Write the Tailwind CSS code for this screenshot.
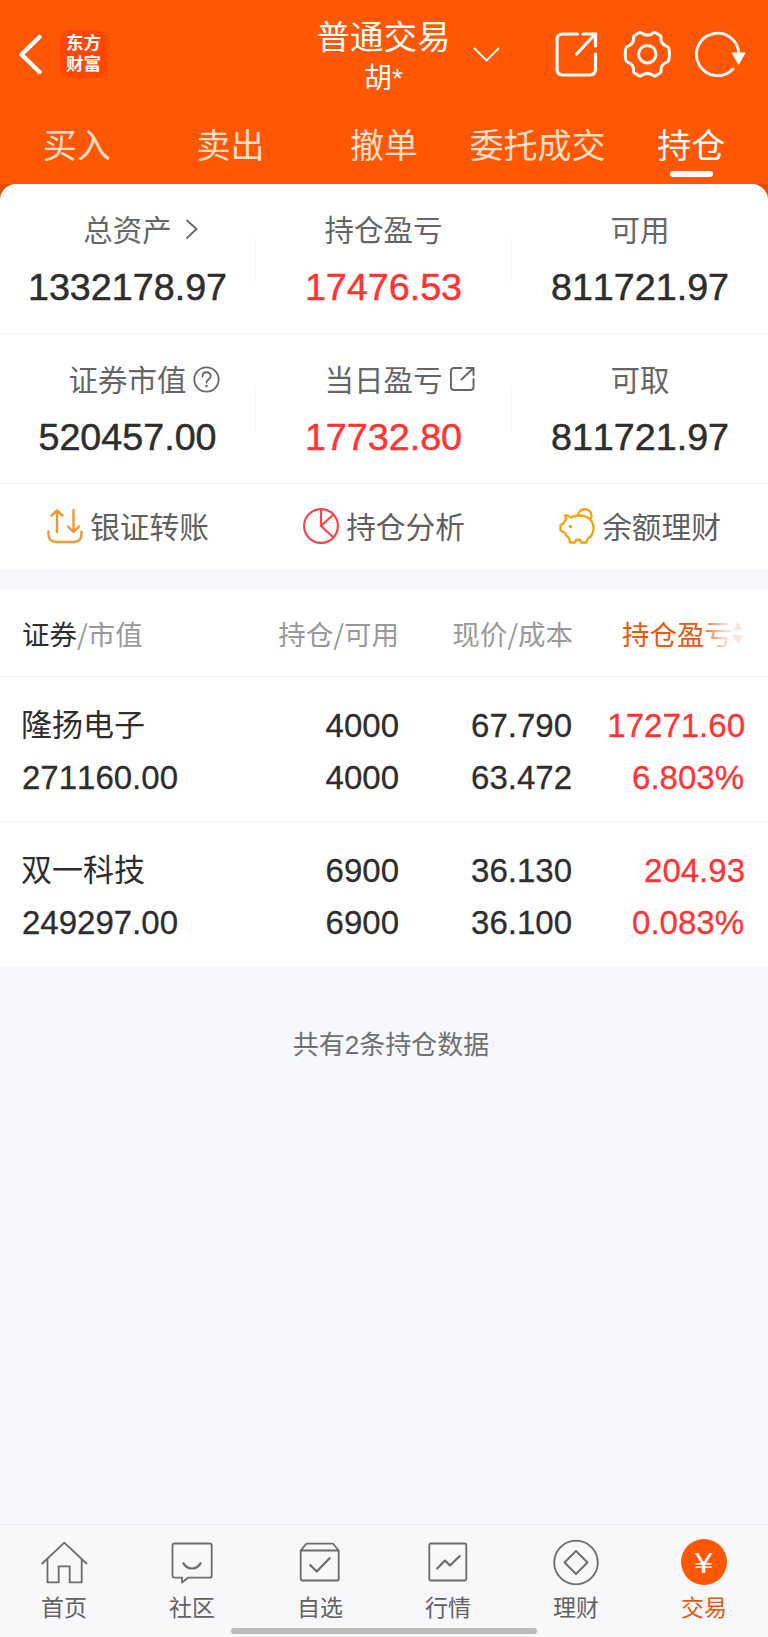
<!DOCTYPE html>
<html lang="zh-CN">
<head>
    <meta charset="UTF-8">
    <title>普通交易 - 持仓</title>
    <script src="https://cdn.jsdelivr.net/npm/@tailwindcss/browser@4"></script>
</head>
<body class="bg-[#f7f8fb] font-['Liberation_Sans','Noto_Sans_CJK_SC',sans-serif] text-[#2e2e2e] [font-kerning:none]">

<div class="relative flex h-[1637px] w-[768px] flex-col overflow-hidden">

    <!-- Header -->
    <header class="h-[184px] bg-[#ff5703] text-white">
        <div class="flex h-[108px] items-center">
            <div class="flex w-[300px] items-center pl-[17px]">
                <svg class="h-[40px] w-[26px]" viewBox="0 0 26 40" fill="none" stroke="currentColor" stroke-width="4.400" stroke-linecap="round" stroke-linejoin="round">
                    <path d="M22.500 3 4.500 20.500 22.500 38"/>
                </svg>
                <div class="ml-[17px] h-[48px] w-[47px] rounded-[10px] bg-[#ff4703] pt-[3px] text-center text-[17.500px] leading-[20.500px] font-bold">
                    东方<br>财富
                </div>
            </div>
            <div class="w-[167px] text-center">
                <div class="mt-[5px] text-[33.500px] leading-[44px]">普通交易</div>
                <div class="mt-px text-[28px] leading-[36px]">胡*</div>
            </div>
            <svg class="ml-[6px] h-[18px] w-[27px]" viewBox="0 0 27 18" fill="none" stroke="currentColor" stroke-width="1.800">
                <path d="M1 3 13.500 15.500 26 3"/>
            </svg>
            <svg class="ml-[54px] h-[48px] w-[44px]" viewBox="0 0 44 48" fill="none" stroke="currentColor" stroke-width="3.200" stroke-linecap="round">
                <path d="M23.500 4H9Q3 4 3 10V39Q3 45 9 45H35.500Q41.500 45 41.500 39V24"/>
                <path d="M29 4H41.500V16M40.500 5 22.500 24"/>
            </svg>
            <svg class="ml-[25px] h-[48px] w-[48px]" viewBox="0 0 48 48" fill="none" stroke="currentColor" stroke-width="3" stroke-linejoin="round">
                <path d="M18 2.800Q24.300 7.500 30.700 2.800Q31.700 2.200 32.700 2.800L37 5.500Q38.300 6.500 38 8Q37.500 14 44 16.300Q45.500 16.800 45.800 18.500Q47 24 45.800 30Q45.500 31.500 44 32.200Q37.500 34.500 38 40.500Q38.300 42 37 43L32.700 45.700Q31.700 46.300 30.700 45.700Q24.300 41 18 45.700Q17 46.300 16 45.700L11.500 43Q10.300 42 10.500 40.500Q11 34.500 4.500 32.200Q3 31.500 2.800 30Q1.600 24 2.800 18.500Q3 16.800 4.500 16.300Q11 14 10.500 8Q10.300 6.500 11.500 5.500L16 2.800Q17 2.200 18 2.800Z"/>
                <circle cx="24.300" cy="24.200" r="8.700"/>
            </svg>
            <svg class="ml-[24px] h-[48px] w-[52px]" viewBox="0 0 52 48" fill="none" stroke="currentColor" stroke-width="2.800" stroke-linecap="round">
                <path d="M43.800 24A21.200 21.200 0 1 0 38 39"/>
                <path d="M37.500 23H50L43.700 34Z" fill="currentColor" stroke-width="1"/>
            </svg>
        </div>
        <nav class="grid h-[76px] grid-cols-5 text-center text-[34px] leading-[48px] text-[#ffdfc9]">
            <span class="pt-[14px]">买入</span>
            <span class="pt-[14px]">卖出</span>
            <span class="pt-[14px]">撤单</span>
            <span class="pt-[14px]">委托成交</span>
            <span class="flex flex-col items-center pt-[14px] text-white">
                持仓
                <span class="h-[6px] w-[43px] translate-y-px rounded-full bg-white"></span>
            </span>
        </nav>
    </header>

    <!-- Account summary -->
    <div class="bg-[#dc4f08]">
        <section class="rounded-t-[16px] bg-white text-[37.700px] leading-[44px]">
            <div class="flex h-[150px] border-b border-[#f3f3f3] pt-[27px] text-center">
                <div class="w-[255px]">
                    <div class="relative mx-auto w-fit text-[29.500px] leading-[40px] text-[#666]">
                        总资产
                        <svg class="absolute top-[8px] left-full ml-[13px] h-[22px] w-[14px]" viewBox="0 0 14 22" fill="none" stroke="currentColor" stroke-width="1.800">
                            <path d="M1.500 1 11.500 10 1.500 19.500"/>
                        </svg>
                    </div>
                    <div class="mt-[14px] [-webkit-text-stroke:0.5px]">1332178.97</div>
                </div>
                <div class="mt-[26px] h-[46px] w-px bg-[#f6f6f6]"></div>
                <div class="w-[255px]">
                    <div class="text-[29.500px] leading-[40px] text-[#666]">持仓盈亏</div>
                    <div class="mt-[14px] text-[#ff3434] [-webkit-text-stroke:0.5px]">17476.53</div>
                </div>
                <div class="mt-[26px] h-[46px] w-px bg-[#f6f6f6]"></div>
                <div class="w-[256px]">
                    <div class="text-[29.500px] leading-[40px] text-[#666]">可用</div>
                    <div class="mt-[14px] [-webkit-text-stroke:0.5px]">811721.97</div>
                </div>
            </div>
            <div class="flex h-[150px] border-b border-[#f3f3f3] pt-[27px] text-center">
                <div class="w-[255px]">
                    <div class="relative mx-auto w-fit text-[29.500px] leading-[40px] text-[#666]">
                        证券市值
                        <svg class="absolute top-[5px] left-full ml-[6px] h-[27px] w-[27px]" viewBox="0 0 27 27" fill="none" stroke="currentColor" stroke-width="1.800" stroke-linecap="round">
                            <circle cx="13.500" cy="13.500" r="12.200"/>
                            <path d="M9.500 10.500C9.500 4.800 17.800 5 17.700 10.200C17.600 13.200 13.600 13.200 13.500 16.500"/>
                            <circle cx="13.500" cy="20" r="1.300" fill="currentColor" stroke="none"/>
                        </svg>
                    </div>
                    <div class="mt-[14px] [-webkit-text-stroke:0.5px]">520457.00</div>
                </div>
                <div class="mt-[25px] h-[46px] w-px bg-[#f6f6f6]"></div>
                <div class="w-[255px]">
                    <div class="relative mx-auto w-fit text-[29.500px] leading-[40px] text-[#666]">
                        当日盈亏
                        <svg class="absolute top-[5px] left-full ml-[6px] h-[26px] w-[26px]" viewBox="0 0 26 26" fill="none" stroke="currentColor" stroke-width="1.900" stroke-linecap="round">
                            <path d="M12.500 2H5Q2 2 2 5V21Q2 24 5 24H21.500Q24.500 24 24.500 21V13"/>
                            <path d="M17.500 2H24.500V9M24 2.500 12.500 13.500"/>
                        </svg>
                    </div>
                    <div class="mt-[14px] text-[#ff3434] [-webkit-text-stroke:0.5px]">17732.80</div>
                </div>
                <div class="mt-[25px] h-[46px] w-px bg-[#f6f6f6]"></div>
                <div class="w-[256px]">
                    <div class="text-[29.500px] leading-[40px] text-[#666]">可取</div>
                    <div class="mt-[14px] [-webkit-text-stroke:0.5px]">811721.97</div>
                </div>
            </div>
            <div class="grid h-[85px] grid-cols-3 text-[29.700px] leading-[40px] text-[#606060]">
                <div class="flex items-center justify-center gap-[7px]">
                    <svg class="h-[36px] w-[36px]" viewBox="0 0 36 36" fill="none" stroke="#ee9a32" stroke-width="2.400" stroke-linecap="round" stroke-linejoin="round">
                        <path d="M1.500 22.500V25Q1.500 33 9.500 33H26.500Q34.500 33 34.500 25V22.500"/>
                        <path d="M10 23V2M4.500 6.500 10 1.500 15.500 6.500M26.500 1V23M21 17.500 26.500 23 32 17.500"/>
                    </svg>
                    <span class="mt-[2px]">银证转账</span>
                </div>
                <div class="flex items-center justify-center gap-[7px]">
                    <svg class="-mt-px h-[36px] w-[36px]" viewBox="0 0 36 36" fill="none" stroke="#fb4348" stroke-width="2.200" stroke-linejoin="round">
                        <circle cx="18" cy="18" r="16.900"/>
                        <path d="M18 1V18L30.500 29.500M18 18 30.500 6.500"/>
                    </svg>
                    <span class="mt-[2px]">持仓分析</span>
                </div>
                <div class="flex items-center justify-center gap-[7px]">
                    <svg class="-mt-px h-[36px] w-[36px]" viewBox="0 0 36 36" fill="none" stroke="#f3a30b" stroke-width="2.300" stroke-linejoin="round">
                        <path d="M6 7.500Q9.500 7 12 9.500Q18 6.500 25 8Q34.500 11 34.500 20Q34.500 27 28.500 31L27.500 34.500H22L21 32H17L16 34.500H11L10 30Q7 28.500 6 25L1.500 22.500V17L4.500 15.500Q5 13 7.500 11Z"/>
                        <path d="M19 7.500C19.500 -0.500 32 -1 32.500 7Q32.500 9.500 31.500 11"/>
                        <circle cx="11.500" cy="18.500" r="1.800" fill="#f3a30b" stroke="none"/>
                    </svg>
                    <span class="mt-[2px]">余额理财</span>
                </div>
            </div>
        </section>
    </div>

    <!-- Positions -->
    <section class="mt-[21px] bg-white">
        <div class="grid h-[87px] grid-cols-[200px_177px_174px_173px] items-center border-b border-[#f3f3f3] pl-[22px] text-right font-['Noto_Sans_CJK_SC',sans-serif] text-[27.500px] leading-[40px] text-[#999]">
            <div class="text-left"><span class="text-[#2e2e2e]">证券</span>/市值</div>
            <div>持仓/可用</div>
            <div>现价/成本</div>
            <div class="relative flex items-center pl-[49px] text-[#e85a10]">
                <span class="whitespace-nowrap">持仓盈亏</span>
                <svg class="-ml-px h-[24px] w-[14px] shrink-0" viewBox="0 0 14 24" fill="currentColor">
                    <path d="M7 1 12 9H2ZM1 14H13L7 23Z"/>
                </svg>
                <!-- scroll fade -->
                <div class="absolute inset-y-0 right-0 w-[44px] bg-linear-to-r from-white/10 via-white/75 to-white/90"></div>
            </div>
        </div>
        <div class="grid h-[145px] grid-cols-[200px_177px_173px_174px] gap-y-[12px] border-b border-[#f5f5f5] pt-[29px] pl-[22px] text-right text-[33px] leading-[40px] content-start [-webkit-text-stroke:0.3px]">
            <div class="-ml-px text-left text-[31px] [-webkit-text-stroke:0]">隆扬电子</div>
            <div>4000</div>
            <div>67.790</div>
            <div class="pr-px text-[#ff3434]">17271.60</div>
            <div class="text-left">271160.00</div>
            <div>4000</div>
            <div>63.472</div>
            <div class="pr-[2px] text-[#ff3434]">6.803%</div>
        </div>
        <div class="grid h-[145px] grid-cols-[200px_177px_173px_174px] gap-y-[12px] pt-[29px] pl-[22px] text-right text-[33px] leading-[40px] content-start [-webkit-text-stroke:0.3px]">
            <div class="-ml-px text-left text-[31px] [-webkit-text-stroke:0]">双一科技</div>
            <div>6900</div>
            <div>36.130</div>
            <div class="pr-px text-[#ff3434]">204.93</div>
            <div class="text-left">249297.00</div>
            <div>6900</div>
            <div>36.100</div>
            <div class="pr-[2px] text-[#ff3434]">0.083%</div>
        </div>
    </section>

    <p class="mt-[58px] pl-[14px] text-center text-[26px] leading-[40px] text-[#707070]">共有2条持仓数据</p>

    <!-- Tab bar -->
    <nav class="mt-auto grid h-[113px] grid-cols-6 border-t border-[#ebecef] bg-[#f8f8fb] pt-[14px] text-[23px] leading-[32px] text-[#626262]">
        <div class="flex flex-col items-center gap-[7px]">
            <svg class="h-[46px] w-[46px] overflow-visible" viewBox="0 0 46 46" fill="none" stroke="#6b6b6b" stroke-width="1.800">
                <path d="M0.700 25 23.300 3.700 46 25M6.500 20V43.300H17.700V27.300H28.700V43.300H40.700V20"/>
            </svg>
            <span>首页</span>
        </div>
        <div class="flex flex-col items-center gap-[7px]">
            <svg class="h-[46px] w-[46px]" viewBox="0 0 46 46" fill="none" stroke="#6b6b6b" stroke-width="1.800" stroke-linejoin="round">
                <path d="M5.500 4.500H40.700Q42.700 4.500 42.700 6.500V36.700Q42.700 38.700 40.700 38.700H19L13 43.500V38.700H5.500Q3.500 38.700 3.500 36.700V6.500Q3.500 4.500 5.500 4.500Z"/>
                <path d="M14 23.500Q17 29.500 23 29.500T32 23.500" stroke-width="2.200"/>
            </svg>
            <span>社区</span>
        </div>
        <div class="flex flex-col items-center gap-[7px]">
            <svg class="h-[46px] w-[46px]" viewBox="0 0 46 46" fill="none" stroke="#6b6b6b" stroke-width="1.800" stroke-linejoin="round">
                <path d="M3.700 11.500H41.700V39.500Q41.700 41.500 39.700 41.500H5.700Q3.700 41.500 3.700 39.500V11.500L9 5.200Q9.500 4.700 10 4.700H35.500Q36 4.700 36.500 5.200L41.700 11.500"/>
                <path d="M12.700 25.500 19.700 32.500 33.300 18.500" stroke-width="2.200"/>
            </svg>
            <span>自选</span>
        </div>
        <div class="flex flex-col items-center gap-[7px]">
            <svg class="h-[46px] w-[46px]" viewBox="0 0 46 46" fill="none" stroke="#6b6b6b" stroke-width="1.800" stroke-linejoin="round">
                <rect x="4.300" y="4.500" width="37" height="37" rx="1.500"/>
                <path d="M11.700 30 20 21.500 25 26.500 35.300 16.500" stroke-width="2.200"/>
            </svg>
            <span>行情</span>
        </div>
        <div class="flex flex-col items-center gap-[7px]">
            <svg class="h-[46px] w-[46px]" viewBox="0 0 46 46" fill="none" stroke="#6b6b6b" stroke-width="1.800" stroke-linejoin="round">
                <circle cx="23" cy="23.500" r="21.800"/>
                <path d="M23 12 34.500 23.500 23 35 11.500 23.500Z"/>
            </svg>
            <span>理财</span>
        </div>
        <div class="flex flex-col items-center gap-[7px] text-[#e05a10]">
            <div class="flex h-[46px] w-[46px] items-center justify-center rounded-full bg-[#ff5703] text-white">
                <span class="-mt-[3px] scale-x-125 font-['Noto_Sans_CJK_SC',sans-serif] text-[28px] leading-[44px]">¥</span>
            </div>
            <span>交易</span>
        </div>
    </nav>

    <!-- Home indicator -->
    <div class="absolute bottom-[3px] left-[231px] h-[6px] w-[306px] rounded-full bg-[#bbbbbd]"></div>
</div>

</body>
</html>
